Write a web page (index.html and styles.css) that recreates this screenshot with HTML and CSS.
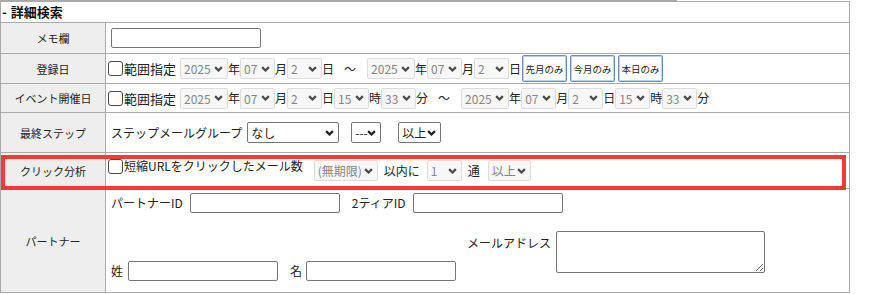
FILE: index.html
```html
<!DOCTYPE html>
<html lang="ja">
<head>
<meta charset="utf-8">
<title>詳細検索</title>
<link rel="stylesheet" href="styles.css">
</head>
<body>
<div class="tabline"></div>
<div class="search">
  <div class="head"><span class="toggle">-</span>詳細検索</div>

  <div class="lbl">メモ欄</div>
  <div class="val"><input type="text" class="txt"></div>

  <div class="lbl">登録日</div>
  <div class="val">
    <input type="checkbox" class="cb"><span class="cbl">範囲指定</span>
    <select class="sel w-y ml4" disabled><option>2025</option></select><span>年</span>
    <select class="sel w-2" disabled><option>07</option></select><span>月</span>
    <select class="sel w-2" disabled><option>2</option></select><span>日</span>
    <span class="tilde">～</span>
    <select class="sel w-y" disabled><option>2025</option></select><span>年</span>
    <select class="sel w-2" disabled><option>07</option></select><span>月</span>
    <select class="sel w-2" disabled><option>2</option></select><span>日</span>
    <button type="button" class="qb first">先月のみ</button>
    <button type="button" class="qb">今月のみ</button>
    <button type="button" class="qb">本日のみ</button>
  </div>

  <div class="lbl">イベント開催日</div>
  <div class="val">
    <input type="checkbox" class="cb"><span class="cbl">範囲指定</span>
    <select class="sel w-y ml4" disabled><option>2025</option></select><span>年</span>
    <select class="sel w-2" disabled><option>07</option></select><span>月</span>
    <select class="sel w-2" disabled><option>2</option></select><span>日</span>
    <select class="sel w-2" disabled><option>15</option></select><span>時</span>
    <select class="sel w-2" disabled><option>33</option></select><span>分</span>
    <span class="tilde">～</span>
    <select class="sel w-y" disabled><option>2025</option></select><span>年</span>
    <select class="sel w-2" disabled><option>07</option></select><span>月</span>
    <select class="sel w-2" disabled><option>2</option></select><span>日</span>
    <select class="sel w-2" disabled><option>15</option></select><span>時</span>
    <select class="sel w-2" disabled><option>33</option></select><span>分</span>
  </div>

  <div class="lbl">最終ステップ</div>
  <div class="val">
    <span>ステップメールグループ</span>
    <select class="sel on w-none ml5"><option>なし</option></select>
    <select class="sel on w-dash ml12"><option>---</option></select>
    <select class="sel on w-ijo ml17"><option>以上</option></select>
  </div>

  <div class="lbl">クリック分析</div>
  <div class="val click">
    <input type="checkbox" class="cb top"><span class="cbl small top">短縮URLをクリックしたメール数</span>
    <select class="sel w-mu ml11" disabled><option>(無期限)</option></select>
    <span class="ml6">以内に</span>
    <select class="sel w-2 ml7" disabled><option>1</option></select>
    <span class="ml6">通</span>
    <select class="sel w-ijo ml8" disabled><option>以上</option></select>
  </div>

  <div class="lbl">パートナー</div>
  <div class="val partner">
    <div class="prow">
      <span>パートナーID</span><input type="text" class="txt ml7">
      <span class="ml12">2ティアID</span><input type="text" class="txt ml7">
    </div>
    <div class="prow2">
      <div class="names">
        <span>姓</span><input type="text" class="txt ml5">
        <span class="ml12">名</span><input type="text" class="txt ml4">
      </div>
      <div class="mail">
        <span class="mail-l">メールアドレス</span><textarea class="ta"></textarea>
      </div>
    </div>
  </div>
</div>
<div class="annot"></div>
</body>
</html>
```

FILE: styles.css
```css
body {
  margin: 0;
  position: relative;
  background: #fff;
  color: #222;
  font-family: "Noto Sans CJK JP", "Noto Sans", sans-serif;
  font-size: 12px;
  line-height: 14px;
}

.tabline {
  width: 677px;
  height: 1px;
  background: #aaa;
}

.search {
  display: grid;
  box-sizing: border-box;
  width: 850px;
  grid-template-columns: 105px 743px;
  grid-template-rows: 21px 31px 30px 29px 40px 36px 104px;
  border-top: 1px solid #aaa;
  border-left: 1px solid #aaa;
  border-right: 1px solid #aaa;
}

.head {
  grid-column: 1 / -1;
  box-sizing: border-box;
  display: flex;
  align-items: center;
  padding-left: 1px;
  border-bottom: 1px solid #aaa;
  font-size: 13px;
  font-weight: bold;
  color: #111;
}

.toggle {
  margin-right: 4px;
}

.lbl {
  box-sizing: border-box;
  display: flex;
  align-items: center;
  justify-content: center;
  background: #eee;
  border-right: 1px solid #aaa;
  border-bottom: 1px solid #aaa;
  font-size: 11px;
  color: #222;
}

.val {
  box-sizing: border-box;
  display: flex;
  align-items: center;
  padding-left: 5px;
  border-bottom: 1px solid #aaa;
  white-space: nowrap;
}

.txt {
  box-sizing: border-box;
  width: 150px;
  height: 20px;
  margin: 0;
  padding: 0 3px;
  border: 1px solid #767676;
  border-radius: 2px;
  background: #fff;
  font: inherit;
}

.cb {
  appearance: none;
  -webkit-appearance: none;
  box-sizing: border-box;
  width: 15px;
  height: 15px;
  margin: 0 0 0 -3px;
  border: 1px solid #4a4a4a;
  border-radius: 3px;
  background: #fff;
  flex: none;
}

.cbl {
  margin-left: 1px;
  font-size: 13px;
  line-height: 15px;
}

.cbl.small {
  font-size: 12px;
}

.sel {
  appearance: none;
  -webkit-appearance: none;
  box-sizing: border-box;
  height: 21px;
  margin: 0;
  padding: 0 0 0 3px;
  border: 1px solid #dcdcdc;
  border-radius: 2px;
  background-color: #f7f7f7;
  background-image: url("data:image/svg+xml,%3Csvg xmlns='http://www.w3.org/2000/svg' viewBox='0 0 8 5'%3E%3Cpath d='M1 .8l3 3 3-3' fill='none' stroke='%234a4a4a' stroke-width='2'/%3E%3C/svg%3E");
  background-repeat: no-repeat;
  background-position: right 4px center;
  background-size: 9px 6px;
  color: #858585;
  font-family: inherit;
  font-size: 12px;
  opacity: 1;
  flex: none;
}

.sel.on {
  border-color: #767676;
  background-color: #fff;
  background-image: url("data:image/svg+xml,%3Csvg xmlns='http://www.w3.org/2000/svg' viewBox='0 0 8 5'%3E%3Cpath d='M1 .8l3 3 3-3' fill='none' stroke='%23222' stroke-width='2'/%3E%3C/svg%3E");
  color: #222;
}

.w-y { width: 48px; }
.w-2 { width: 35px; }
.w-none { width: 92px; }
.w-dash { width: 30px; }
.w-ijo { width: 43px; }
.w-mu { width: 64px; }

.ml4 { margin-left: 4px; }
.ml5 { margin-left: 5px; }
.ml6 { margin-left: 6px; }
.ml7 { margin-left: 7px; }
.ml8 { margin-left: 8px; }
.ml11 { margin-left: 11px; }
.ml12 { margin-left: 12px; }
.ml17 { margin-left: 17px; }

.tilde {
  margin: 0 11px 0 10px;
}

.qb {
  box-sizing: border-box;
  width: 45px;
  height: 27px;
  margin: 0 0 0 3px;
  padding: 0;
  border: 1px solid #6f8db6;
  border-radius: 2px;
  box-shadow: inset 0 0 0 1px #bcd2ec;
  background: #fff;
  color: #222;
  font-family: inherit;
  font-size: 9.5px;
  flex: none;
}

.qb.first {
  margin-left: 1px;
}

.click {
  align-items: center;
}

.click .top {
  align-self: flex-start;
  margin-top: 6px;
}

.click .cbl.top {
  margin-top: 5px;
}

.partner {
  flex-direction: column;
  align-items: flex-start;
  padding-top: 4px;
}

.prow {
  display: flex;
  align-items: center;
  height: 20px;
}

.prow2 {
  display: flex;
  align-items: flex-start;
  margin-top: 18px;
}

.names {
  display: flex;
  align-items: center;
  margin-top: 30px;
}

.mail {
  display: flex;
  align-items: flex-start;
  margin-left: 11px;
}

.mail-l {
  margin-top: 5px;
}

.ta {
  box-sizing: border-box;
  width: 209px;
  height: 42px;
  margin: 0 0 0 5px;
  border: 1px solid #767676;
  border-radius: 2px;
  font: inherit;
}

.annot {
  position: absolute;
  left: 1px;
  top: 155px;
  width: 845px;
  height: 35px;
  box-sizing: border-box;
  border: 4px solid #fa3636;
  pointer-events: none;
}
```
